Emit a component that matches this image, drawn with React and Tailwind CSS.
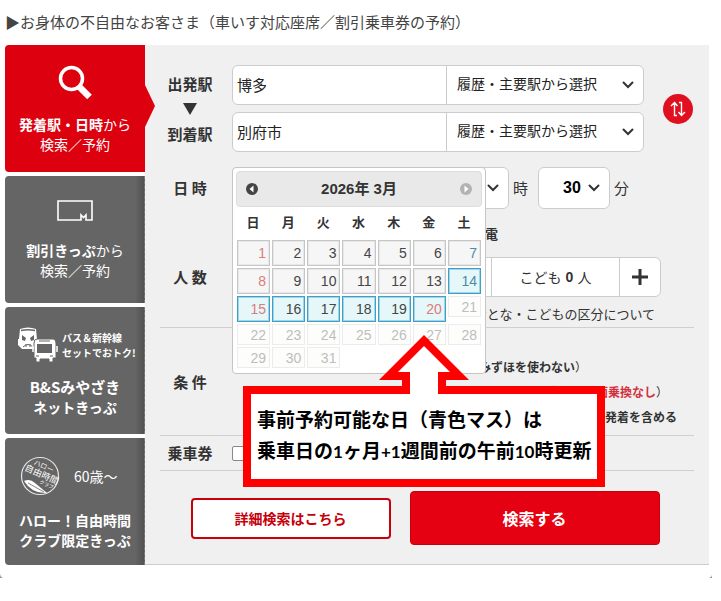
import React, { useState } from "react";

const WEEKDAYS = ["日", "月", "火", "水", "木", "金", "土"];
const WEEKS = [
  [1, 2, 3, 4, 5, 6, 7],
  [8, 9, 10, 11, 12, 13, 14],
  [15, 16, 17, 18, 19, 20, 21],
  [22, 23, 24, 25, 26, 27, 28],
  [29, 30, 31, null, null, null, null],
];
const HOLIDAYS = [1, 8, 15, 20];
const SATURDAYS = [7, 14];

function dayClass(day) {
  if (day > 20) return "h-[21px] border border-[#ececec] bg-[#fdfdfb] text-[#bdbdbd]";
  const box =
    day >= 14
      ? "h-[26px] border border-[#3f9fc8] bg-[#e6f7f9] shadow-[inset_0_0_0_1px_#9fd6e6]"
      : "h-[26px] border border-[#c6c6c6] bg-[#f6f6f6] shadow-[inset_0_0_0_1px_#e8e8e8]";
  if (HOLIDAYS.includes(day)) return `${box} text-[#dc7c7c]`;
  if (SATURDAYS.includes(day)) return `${box} text-[#4b8ba6]`;
  return `${box} text-[#454545]`;
}

function Chevron({ className }) {
  return (
    <svg viewBox="0 0 12 8" className={`pointer-events-none absolute h-2 w-3 ${className}`}>
      <path d="M1.500 1.500 6 6l4.500-4.500" fill="none" stroke="#333" strokeWidth="2" strokeLinecap="round" />
    </svg>
  );
}

function StationRow({ id, label, value }) {
  return (
    <div className="flex h-10 overflow-hidden rounded-md border border-[#cccccc] bg-white">
      <input
        id={id}
        defaultValue={value}
        className="min-w-0 flex-1 px-1 text-[15px] text-[#222222] outline-none"
      />
      <div className="relative flex w-[197px] items-center border-l border-[#cccccc]">
        <select
          aria-label={`${label}の履歴・主要駅`}
          className="h-full w-full appearance-none pb-1 pl-[10px] text-sm text-[#222222] outline-none"
        >
          <option>履歴・主要駅から選択</option>
        </select>
        <Chevron className="right-[9px]" />
      </div>
    </div>
  );
}

function MenuCard({ children, active }) {
  return (
    <a
      href="#"
      className={
        active
          ? "relative flex h-[127px] flex-col items-center rounded-l bg-[#dd000f] pt-[18px] text-white"
          : "relative flex h-[127px] flex-col items-center rounded-l bg-[#656565] text-white"
      }
    >
      {active ? (
        <svg viewBox="0 0 10 42" className="absolute top-10 left-full h-[42px] w-[10px]">
          <path d="M0 0 10 21 0 42z" fill="#dd000f" />
        </svg>
      ) : (
        <span className="absolute inset-y-0 right-0 w-[10px] border-r border-dashed border-[#7a7a7a] bg-linear-to-r from-[#656565] to-[#525252]" />
      )}
      {children}
    </a>
  );
}

function Sidebar() {
  return (
    <nav className="relative z-10 flex w-[140px] shrink-0 flex-col gap-1 bg-white text-sm leading-5">
      <MenuCard active>
        <svg viewBox="0 0 36 38" className="h-[38px] w-9" fill="none" stroke="#fff">
          <circle cx="14.500" cy="15.500" r="11" strokeWidth="3.500" />
          <path d="M22.500 24 32.500 34" strokeWidth="6.500" />
        </svg>
        <span className="mt-[13px]">
          <b>発着駅・日時</b>から
        </span>
        <span>検索／予約</span>
      </MenuCard>
      <MenuCard>
        <svg viewBox="0 0 36 21" className="mt-6 h-[21px] w-9" fill="none" stroke="#fff" strokeWidth="1.600">
          <path d="M1 1h34v19h-6v-5l-2.500 2.500L24 15v5H1z" />
        </svg>
        <span className="mt-[19px]">
          <b>割引きっぷ</b>から
        </span>
        <span>検索／予約</span>
      </MenuCard>
      <MenuCard>
        <div className="mt-[20px] flex w-full items-center gap-1 pl-3">
          <svg viewBox="0 0 41 36" className="h-9 w-[41px] shrink-0">
            <path d="M3 2Q11-1 19 2l1 10q2 3 0 7l-3 3H5l-4-4V12h1z" fill="#fff" />
            <path d="M4 3.500Q11 2 18 3.500" fill="none" stroke="#656565" strokeWidth="1.400" />
            <path d="M5 8l4 3-1 3-3-1zM17 8l-4 3 1 3 3-1z" fill="#656565" />
            <path d="M6 20q5-5 10 0M9 17v3M13 17v3" fill="none" stroke="#656565" />
            <path d="M20 12h16q3 0 3 4v15h-3v4h-4v-3h-9v3h-4v-4h-2V16q0-4 3-4z" fill="#fff" stroke="#656565" />
            <path d="M20 17h15v9H20z" fill="#656565" />
            <path d="M22 14h11M19 29h3M33 29h3" stroke="#656565" />
            <path d="M16 19v6M40 19v6" stroke="#fff" strokeWidth="1.500" />
          </svg>
          <span className="relative flex flex-col text-[10px] leading-[15px] font-bold whitespace-nowrap">
            <span>バス＆新幹線</span>
            <span>セットでおトク!</span>
          </span>
        </div>
        <span className="mt-[14px] text-[15px] font-bold">B&amp;Sみやざき</span>
        <span className="font-bold">ネットきっぷ</span>
      </MenuCard>
      <MenuCard>
        <div className="mt-[18px] flex w-full items-center gap-[14px] pl-[15px]">
          <svg viewBox="0 0 40 40" className="size-10" fill="#fff">
            <circle cx="20" cy="20" r="18.500" fill="none" stroke="#e5e5e5" strokeWidth="1.200" />
            <g className="font-['Noto_Sans_CJK_JP',sans-serif]" transform="rotate(24 20 20)">
              <text x="9" y="12" fontSize="7">ハロー</text>
              <text x="3" y="21" fontSize="9">自由時間</text>
              <text x="22" y="27" fontSize="5">クラブ</text>
            </g>
            <path d="M4 25q6-3 11 2l12 10Q12 38 4 25z" />
            <path d="M8 27l16 9" stroke="#656565" strokeWidth=".8" />
          </svg>
          <span>60歳〜</span>
        </div>
        <span className="mt-[14px] font-bold">ハロー！自由時間</span>
        <span className="font-bold">クラブ限定きっぷ</span>
      </MenuCard>
    </nav>
  );
}

function Calendar() {
  return (
    <div className="absolute top-0 left-0 z-10 h-[207px] w-[254px] rounded border border-[#c5c5c5] bg-white p-[3px]">
      <div className="flex h-[36px] items-center justify-between rounded border border-[#dddddd] bg-[#e9e9e9] px-[9px]">
        <button type="button" aria-label="前の月">
          <svg viewBox="0 0 12 12" className="size-3">
            <circle cx="6" cy="6" r="6" fill="#444" />
            <path d="M7.500 2.500v7L3.500 6z" fill="#fff" />
          </svg>
        </button>
        <span className="font-['Liberation_Sans','Noto_Sans_CJK_JP',sans-serif] text-[15px] leading-5 font-bold text-[#333333]">
          2026年 3月
        </span>
        <button type="button" aria-label="次の月" disabled>
          <svg viewBox="0 0 12 12" className="size-3">
            <circle cx="6" cy="6" r="6" fill="#b3b3b3" />
            <path d="M4.500 2.500v7l4-3.500z" fill="#fff" />
          </svg>
        </button>
      </div>
      <div className="-mx-px">
        <table className="w-full table-fixed border-separate border-spacing-x-[2px] border-spacing-y-[2px]">
          <thead>
            <tr>
              {WEEKDAYS.map((name) => (
                <th key={name} className="h-[29px] p-0 pr-px pb-2 align-bottom text-[13px] leading-4 font-bold">
                  {name}
                </th>
              ))}
            </tr>
          </thead>
          <tbody className="font-['Liberation_Sans',sans-serif] text-sm">
            {WEEKS.map((week) => (
              <tr key={week[0]}>
                {week.map((day, i) => (
                  <td key={i} className="p-0 align-top">
                    {day && (
                      <button
                        type="button"
                        disabled={day > 20}
                        className={`flex w-full items-center justify-end pr-[3px] leading-4 ${dayClass(day)}`}
                      >
                        {day}
                      </button>
                    )}
                  </td>
                ))}
              </tr>
            ))}
          </tbody>
        </table>
      </div>
    </div>
  );
}

function TimeSelect({ label, value }) {
  return (
    <div className="relative flex w-[72px] items-center">
      <select
        aria-label={label}
        className="h-[42px] w-full appearance-none rounded-md border border-[#cccccc] bg-white pl-6 font-['Liberation_Sans',sans-serif] text-base font-bold text-black outline-none"
      >
        <option>{value}</option>
      </select>
      <Chevron className="right-[10px]" />
    </div>
  );
}

function Label({ children, htmlFor }) {
  return (
    <label htmlFor={htmlFor} className="w-[60px] shrink-0 text-center text-[15px] leading-5 font-bold">
      {children}
    </label>
  );
}

function Callout() {
  return (
    <div className="absolute top-[341px] left-[98px] z-20 w-[362px] border-8 border-[#ff0000] bg-white px-[6px] pt-[9px] pb-3 font-['Noto_Sans_CJK_JP',sans-serif] text-[19px] leading-[31px] font-bold whitespace-nowrap text-black">
      <svg viewBox="0 0 90 59" className="absolute -top-[59px] left-[128px] h-[59px] w-[90px]">
        <path d="M45 0 90 45H67v14H23V45H0z" fill="#ff0000" />
        <path d="M45 11 71 37H59v22H31V37H19z" fill="#fff" />
      </svg>
      <p>事前予約可能な日（青色マス）は</p>
      <p>
        乗車日の<Num>1</Num>ヶ月<Num>+1</Num>週間前の午前<Num>10</Num>時更新
      </p>
    </div>
  );
}

function Num({ children }) {
  return <span className="font-['Lato',sans-serif] text-[17px]">{children}</span>;
}

export default function App() {
  const [ticket, setTicket] = useState(false);

  return (
    <main className="bg-white font-['Noto_Sans_CJK_JP',sans-serif] text-[#333333]">
      <a href="#" className="flex h-[45px] items-center pl-[5px] text-[15px] text-[#444444]">
        ▶お身体の不自由なお客さま（車いす対応座席／割引乗車券の予約）
      </a>

      <div className="mr-3 ml-[5px] flex">
        <Sidebar />

        <form className="relative min-w-0 flex-1 border-b border-[#cccccc] bg-[#f0f0f0] px-[15px] pt-5">
          <div className="flex items-center">
            <div className="mr-3 flex w-[60px] shrink-0 flex-col items-center">
              <Label htmlFor="from">出発駅</Label>
              <svg viewBox="0 0 14 12" className="my-[9px] h-3 w-[14px]">
                <path d="M0 0h14L7 12z" fill="#333" />
              </svg>
              <Label htmlFor="to">到着駅</Label>
            </div>
            <div className="flex min-w-0 flex-1 flex-col gap-[7px]">
              <StationRow id="from" label="出発駅" value="博多" />
              <StationRow id="to" label="到着駅" value="別府市" />
            </div>
            <button
              type="button"
              aria-label="出発駅と到着駅を入れ替える"
              className="mr-px ml-[19px] flex size-[30px] shrink-0 items-center justify-center rounded-full bg-[#e01020]"
            >
              <svg viewBox="0 0 16 16" className="size-4" fill="none" stroke="#fff" strokeWidth="1.400">
                <path d="M1 5l3.500-3.500L7.500 5M4.500 2v12.500H7M9 1.500h2.500V14M8.500 11l3 3.500L15 11" />
              </svg>
            </button>
          </div>

          <div className="mt-[15px] flex items-center">
            <Label htmlFor="date">日 時</Label>
            <div className="relative ml-3 flex h-[42px] min-w-0 flex-1 items-center text-sm">
              <input
                id="date"
                className="mr-[15px] h-[42px] w-[190px] rounded-md border border-[#cccccc] bg-white"
              />
              <TimeSelect label="時" value="" />
              <span className="mr-[10px] ml-1 text-[15px]">時</span>
              <TimeSelect label="分" value="30" />
              <span className="ml-1 text-[15px]">分</span>
              <Calendar />
            </div>
          </div>

          <p className="mt-4 w-[338px] text-right text-[13px] leading-[18px] font-bold">終電</p>

          <div className="mt-[14px] flex items-center">
            <span className="w-[60px] shrink-0 text-center text-[15px] leading-5 font-bold">人 数</span>
            <div className="mr-[33px] ml-3 flex h-10 min-w-0 flex-1 items-stretch overflow-hidden rounded-md border border-[#cccccc] bg-white text-sm">
              <span className="flex-1" />
              <span className="flex w-[128px] items-center justify-center gap-1 border-l border-[#cccccc]">
                こども <b className="font-['Liberation_Sans',sans-serif]">0</b> 人
              </span>
              <button
                type="button"
                aria-label="こどもを増やす"
                className="flex w-[41px] items-center justify-center border-l border-[#cccccc]"
              >
                <svg viewBox="0 0 16 16" className="size-4">
                  <path d="M8 0v16M0 8h16" stroke="#333" strokeWidth="3" />
                </svg>
              </button>
            </div>
          </div>

          <div className="flex h-[31px] items-center justify-end border-b border-[#d0d0d0] pt-1 pr-[39px] text-[13px]">
            <a href="#">おとな・こどもの区分について</a>
          </div>

          <div className="flex h-[108px] items-center border-b border-[#d0d0d0]">
            <span className="w-[60px] shrink-0 text-center text-[15px] leading-5 font-bold">条 件</span>
            <div className="flex flex-1 flex-col items-end pt-5 text-xs leading-[25px] font-bold">
              <span className="pr-[107px]">
                みずほを使わない<span className="font-normal">）</span>
              </span>
              <span className="pr-[26px] text-[#d2323f]">
                武雄温泉での対面乗換なし<span className="font-normal text-[#333333]">）</span>
              </span>
              <span className="pr-[17px]">の発着を含める</span>
            </div>
          </div>

          <div className="flex h-[35px] items-center border-b border-[#d0d0d0]">
            <Label htmlFor="ticket">乗車券</Label>
            <input
              id="ticket"
              type="checkbox"
              checked={ticket}
              onChange={(e) => setTicket(e.target.checked)}
              className="ml-3 size-[15px] appearance-none rounded-xs border border-[#888888] bg-white"
            />
          </div>

          <div className="mt-5 flex items-center justify-center gap-[19px] pr-1 pb-[19px]">
            <button
              type="button"
              className="h-[41px] w-[200px] rounded border-2 border-[#c7000b] bg-white text-sm font-bold text-[#c7000b]"
            >
              詳細検索はこちら
            </button>
            <button
              type="submit"
              className="h-[54px] w-[250px] rounded border border-[#c7000b] bg-[#e50012] text-base font-bold text-white"
            >
              検索する
            </button>
          </div>

          <Callout />
        </form>
      </div>

      <div className="mt-2 mr-[9px] flex h-[5px] justify-between">
        <svg viewBox="0 0 4 5" className="h-[5px] w-1">
          <path d="M0 0q0 4 3 5H0z" fill="#999" />
        </svg>
        <svg viewBox="0 0 4 5" className="h-[5px] w-1">
          <path d="M4 2q0 2-3 3h3z" fill="#999" />
        </svg>
      </div>
    </main>
  );
}
